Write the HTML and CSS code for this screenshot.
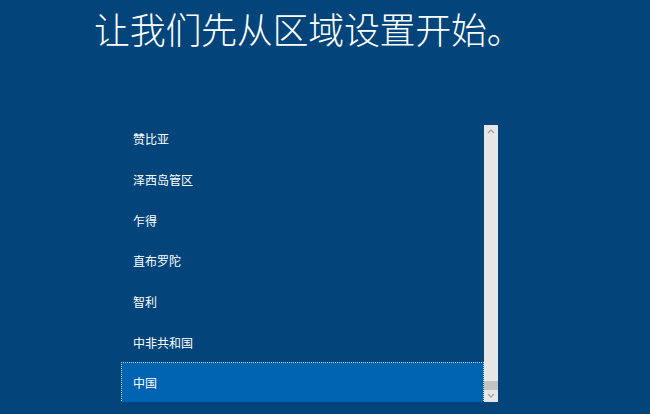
FILE: index.html
```html
<!DOCTYPE html>
<html lang="zh-CN">
<head>
<meta charset="utf-8">
<title>区域设置</title>
<link rel="stylesheet" href="styles.css">
</head>
<body>
<main class="oobe">
  <h1 class="title">让我们先从区域设置开始。</h1>
  <div class="picker">
    <div class="list-viewport">
      <ul class="region-list">
        <li class="region">赞比亚</li>
        <li class="region">泽西岛管区</li>
        <li class="region">乍得</li>
        <li class="region">直布罗陀</li>
        <li class="region">智利</li>
        <li class="region">中非共和国</li>
        <li class="region selected">中国</li>
      </ul>
    </div>
    <div class="scrollbar">
      <svg class="arrow" width="14" height="12" viewBox="0 0 14 12">
        <path d="M4 8 L7 5 L10 8" fill="none" stroke="#a6a6a6" stroke-width="1.3"/>
      </svg>
      <div class="track"><div class="thumb"></div></div>
      <svg class="arrow" width="14" height="12" viewBox="0 0 14 12">
        <path d="M4 4 L7 7 L10 4" fill="none" stroke="#a6a6a6" stroke-width="1.3"/>
      </svg>
    </div>
  </div>
</main>
</body>
</html>
```
FILE: styles.css
```css
html, body {
  margin: 0;
  padding: 0;
  height: 100%;
}

body {
  background: #03457a;
  color: #ffffff;
  font-family: "Noto Sans CJK SC", "Noto Sans", sans-serif;
  overflow: hidden;
}

.oobe {
  display: flex;
  flex-direction: column;
}

.title {
  margin: 0;
  padding: 10px 0 0 94px;
  height: 115px;
  box-sizing: border-box;
  font-size: 36px;
  font-weight: 300;
  line-height: 36px;
  letter-spacing: -0.3px;
}

.picker {
  margin: 10px 0 0 121px;
  width: 377px;
  height: 277px;
  display: flex;
}

.list-viewport {
  flex: 1;
  overflow: hidden;
}

.region-list {
  list-style: none;
  margin: -6.5px 0 0 0;
  padding: 0;
}

.region {
  height: 40.65px;
  box-sizing: border-box;
  padding-left: 12px;
  display: flex;
  align-items: center;
  font-size: 12px;
  color: #ffffff;
}

.region.selected {
  background: #0063b1;
  border: 1px dotted rgba(230, 236, 242, 0.85);
  padding-left: 11px;
}

.scrollbar {
  width: 14px;
  background: #e6e6e6;
  display: flex;
  flex-direction: column;
}

.arrow {
  display: block;
  flex: none;
}

.track {
  flex: 1;
  display: flex;
  flex-direction: column;
  justify-content: flex-end;
  padding-bottom: 0;
}

.thumb {
  height: 9px;
  background: #c2c2c2;
  margin-bottom: 0;
}
```
